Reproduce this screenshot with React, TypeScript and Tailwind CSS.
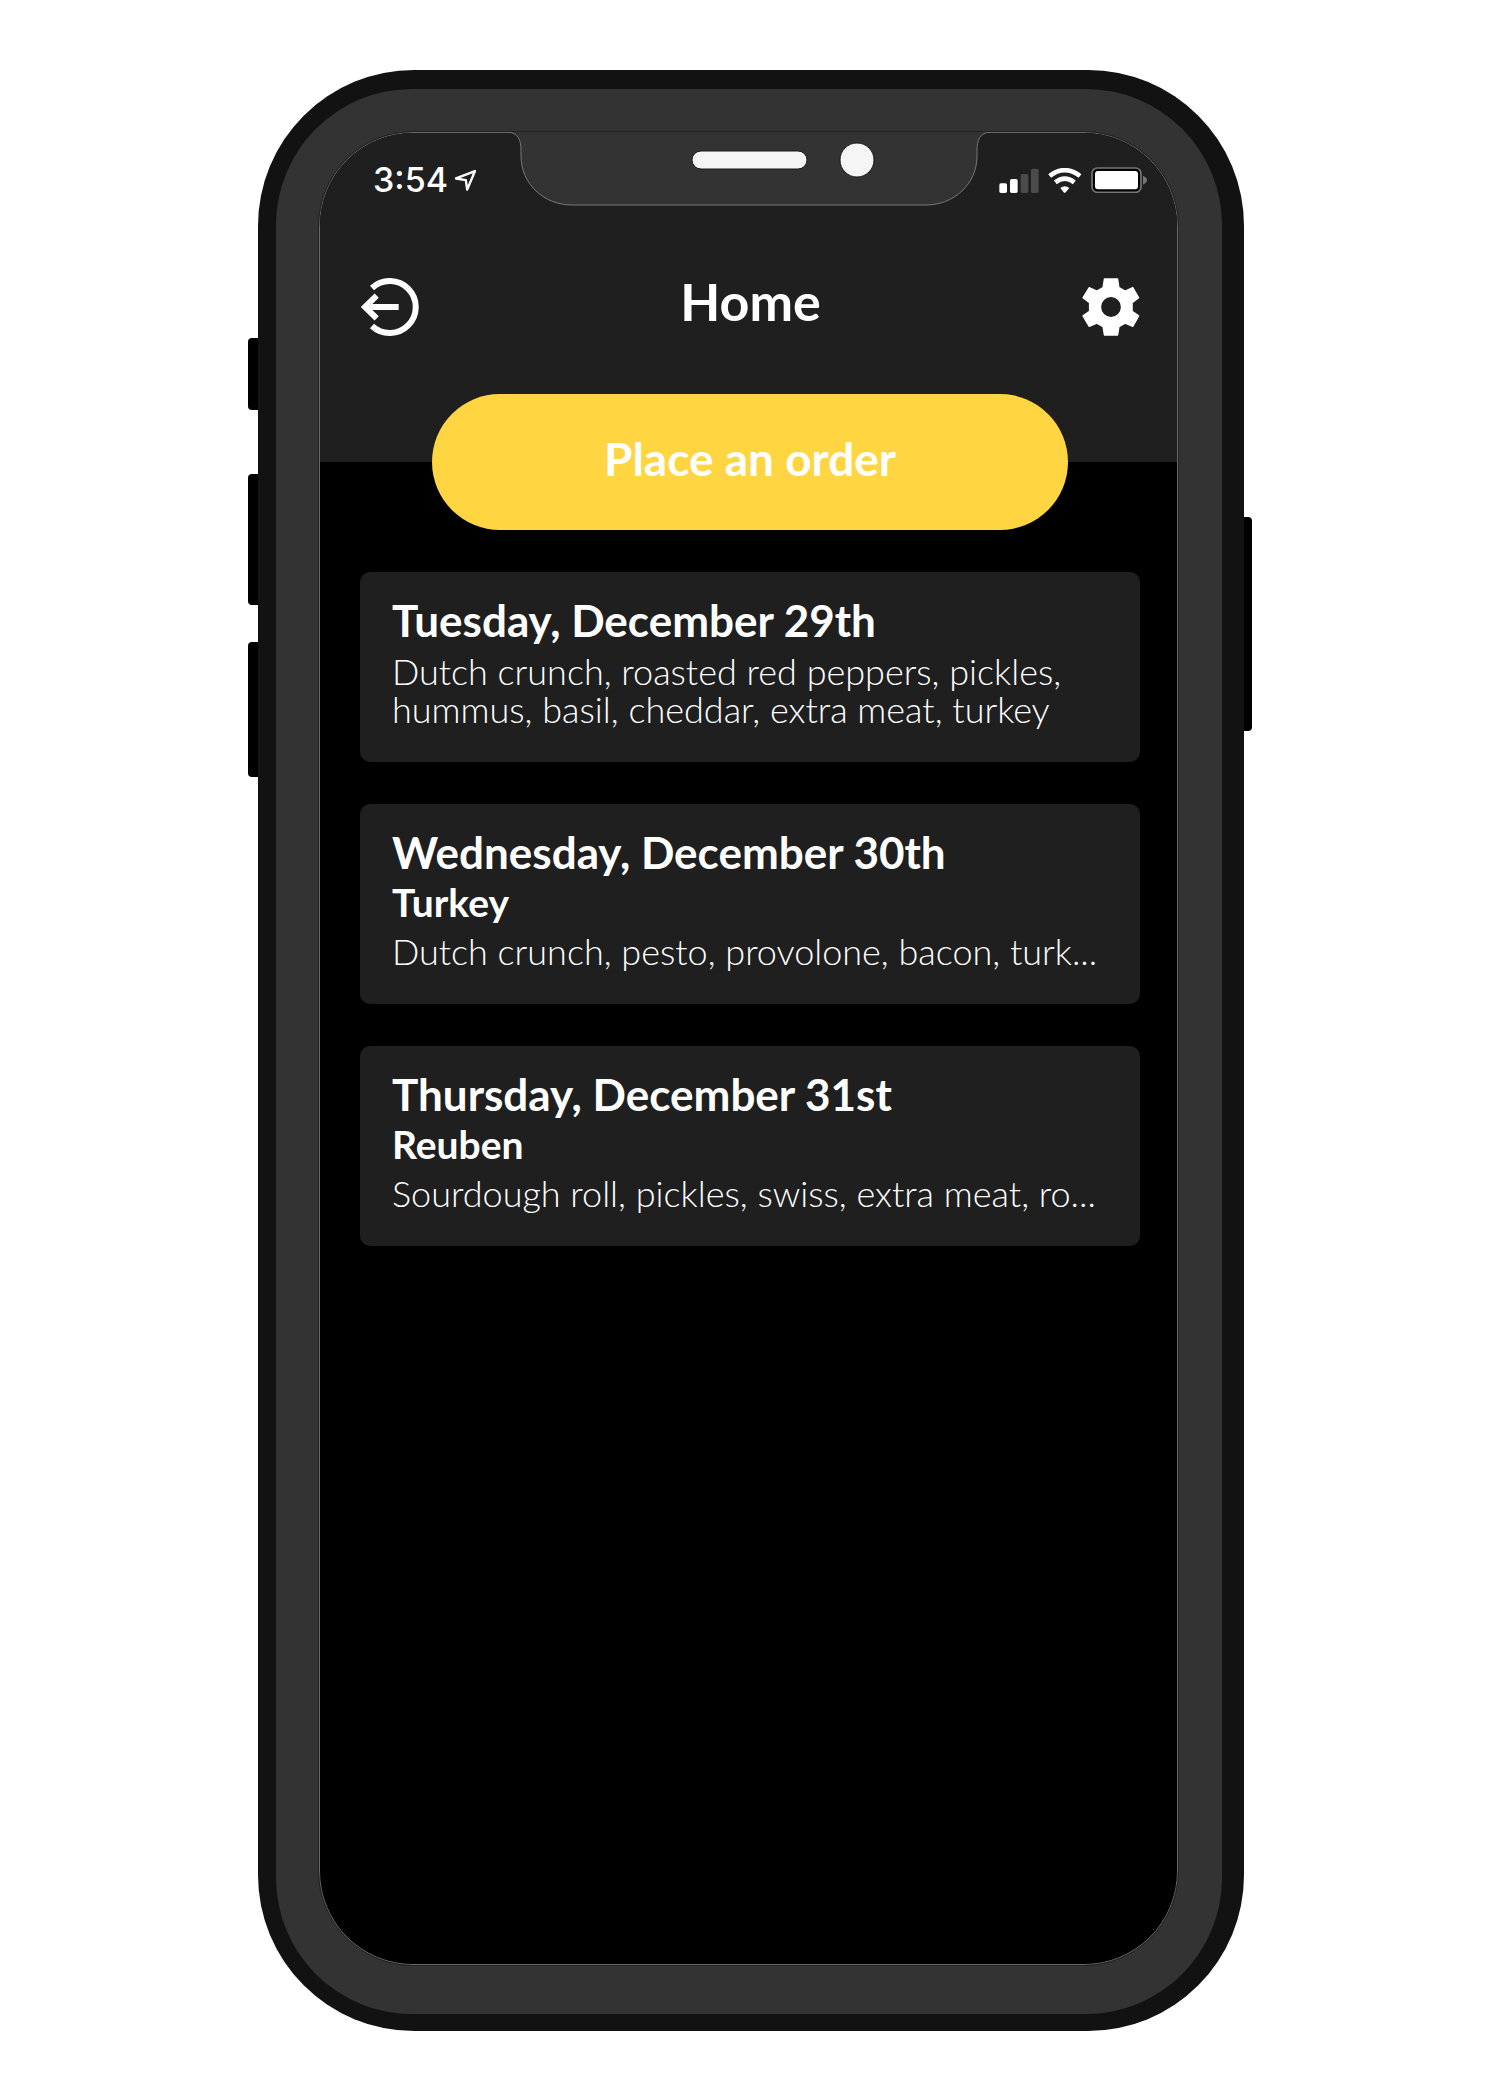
import React from "react";

type Order = { date: string; name?: string; items: string };

const orders: Order[] = [
  {
    date: "Tuesday, December 29th",
    items:
      "Dutch crunch, roasted red peppers, pickles, hummus, basil, cheddar, extra meat, turkey",
  },
  {
    date: "Wednesday, December 30th",
    name: "Turkey",
    items: "Dutch crunch, pesto, provolone, bacon, turk...",
  },
  {
    date: "Thursday, December 31st",
    name: "Reuben",
    items: "Sourdough roll, pickles, swiss, extra meat, ro...",
  },
];

function LocationIcon() {
  return (
    <svg viewBox="645 356 68 68" className="size-[23px]" aria-hidden="true">
      <path
        d="M651 384 L707 362 L684 417 L680 389 Z"
        fill="none"
        stroke="white"
        strokeWidth="7"
        strokeLinejoin="round"
      />
    </svg>
  );
}

function SignalIcon() {
  return (
    <svg viewBox="57 51 120 75" className="h-[25px] w-10" aria-label="Signal">
      <rect x="58" y="97" width="23" height="29" rx="5" fill="white" />
      <rect x="90" y="84" width="23" height="42" rx="5" fill="white" />
      <rect x="122" y="69" width="23" height="57" rx="5" fill="#4b4b4b" />
      <rect x="153" y="53" width="23" height="73" rx="5" fill="#4b4b4b" />
    </svg>
  );
}

function WifiIcon() {
  return (
    <svg viewBox="204 50 102 75" className="h-[25px] w-[34px]" aria-label="Wi-Fi">
      <path
        d="M209 74 Q254 39 300 74 M226 93 Q254 71 283 93"
        fill="none"
        stroke="white"
        strokeWidth="14"
      />
      <path d="M241 110 Q254 99 268 110 L257 123 Q254 126 251 123 Z" fill="white" />
    </svg>
  );
}

function BatteryIcon() {
  return (
    <svg viewBox="334 50 168 78" className="h-[26px] w-14" aria-label="Battery">
      <rect x="337" y="53" width="147" height="73" rx="16" fill="black" stroke="#767676" strokeWidth="5" />
      <rect x="346" y="62" width="129" height="55" rx="9" fill="white" />
      <path d="M490 76 Q502 81 502 89 Q502 97 490 103 Z" fill="#767676" />
    </svg>
  );
}

function LogoutIcon() {
  return (
    <svg viewBox="364 684 174 174" className="size-[58px]" aria-hidden="true">
      <path
        d="M397 714 A78 78 0 1 1 397 828"
        fill="none"
        stroke="white"
        strokeWidth="18"
      />
      <path d="M477 771 H380" stroke="white" strokeWidth="18" />
      <path d="M411 737 L376 771 L411 805" fill="none" stroke="white" strokeWidth="18" />
    </svg>
  );
}

function GearIcon() {
  return (
    <svg viewBox="305 380 176 176" className="size-[58px]" aria-hidden="true">
      <path
        fillRule="evenodd"
        fill="white"
        stroke="white"
        strokeWidth="4"
        strokeLinejoin="round"
        d="M373 383 H413 L417 409 L436 420 L459 409 L477 440 L457 455 V481 L477 495 L459 527 L436 517 L417 528 L413 553 H373 L369 528 L350 517 L327 527 L308 495 L328 481 V455 L308 440 L327 409 L350 420 L369 409 Z M393 436 A32 32 0 1 0 393 500 A32 32 0 1 0 393 436 Z"
      />
    </svg>
  );
}

function Notch() {
  return (
    <div className="absolute inset-x-0 -top-px flex justify-center">
      <svg viewBox="0 0 482 75" className="h-[75px] w-[482px]" aria-hidden="true">
        <path
          d="M0 0 C10 1 13 8 13 18 V24 C13 52 36 73 64 73 H418 C446 73 469 52 469 24 V18 C469 8 472 1 482 0 Z"
          fill="#333333"
        />
        <path
          d="M0 0 C10 1 13 8 13 18 V24 C13 52 36 73 64 73 H418 C446 73 469 52 469 24 V18 C469 8 472 1 482 0"
          fill="none"
          stroke="#777777"
        />
        <rect x="184" y="19" width="115" height="18" rx="9" fill="#f5f5f5" stroke="#1d1d1d" />
        <circle cx="349" cy="28" r="17" fill="#f5f5f5" stroke="#1d1d1d" />
      </svg>
    </div>
  );
}

function OrderCard({ order }: { order: Order }) {
  return (
    <li className="rounded-[10px] bg-[#1f1f1f] px-8 pt-6 pb-[34px]">
      <h2 className="text-[44px] leading-[48px] font-bold">{order.date}</h2>
      {order.name && <h3 className="text-[39px] leading-[52px] font-bold">{order.name}</h3>}
      <p className={`text-[36px] leading-[38px] font-light ${order.name ? "pt-1" : "pt-2"}`}>
        {order.items}
      </p>
    </li>
  );
}

export default function App() {
  return (
    <div className="flex min-h-screen justify-center bg-white py-[70px] pr-3 pl-3.5 font-['Lato',sans-serif] text-white">
      <div className="relative w-full max-w-[986px]">
        <div className="absolute top-[268px] -left-[10px] h-[72px] w-5 rounded bg-black" />
        <div className="absolute top-[404px] -left-[10px] h-[131px] w-5 rounded bg-black" />
        <div className="absolute top-[572px] -left-[10px] h-[135px] w-5 rounded bg-black" />
        <div className="absolute top-[447px] -right-2 h-[214px] w-5 rounded bg-black" />

        <div className="relative rounded-[156px] bg-[#121212] pt-[19px] pr-[22px] pb-[17px] pl-[18px]">
          <div className="rounded-[136px] bg-[#333333] pt-[43px] pr-11 pb-[49px] pl-[43px]">
            <main className="relative min-h-[1833px] rounded-[94px] border border-[#686868] bg-black outline outline-[#222222]">
              <header className="rounded-t-[93px] bg-[#1f1f1f] pb-[125px]">
                <div className="flex items-center justify-between pt-[31px] pr-[30px] pl-[53px]">
                  <div className="flex items-center gap-1.5">
                    <span className="font-['Inter',sans-serif] text-[34px] leading-8 font-medium">3:54</span>
                    <LocationIcon />
                  </div>
                  <div className="flex items-center gap-[9px]">
                    <SignalIcon />
                    <WifiIcon />
                    <BatteryIcon />
                  </div>
                </div>
                <div className="flex items-center justify-between pt-[81px] pr-[37px] pl-[41px]">
                  <button type="button" aria-label="Log out">
                    <LogoutIcon />
                  </button>
                  <h1 className="pb-3 text-[52px] leading-[48px] font-bold">Home</h1>
                  <button type="button" aria-label="Settings">
                    <GearIcon />
                  </button>
                </div>
              </header>
              <Notch />
              <div className="pr-[37px] pl-10">
                <button
                  type="button"
                  className="relative mx-auto -mt-[68px] block h-[136px] w-full max-w-[636px] rounded-full bg-[#ffd541] pb-2 text-[46px] font-bold"
                >
                  Place an order
                </button>
                <ul className="flex flex-col gap-[42px] pt-[42px]">
                  {orders.map((order) => (
                    <OrderCard key={order.date} order={order} />
                  ))}
                </ul>
              </div>
            </main>
          </div>
        </div>
      </div>
    </div>
  );
}
